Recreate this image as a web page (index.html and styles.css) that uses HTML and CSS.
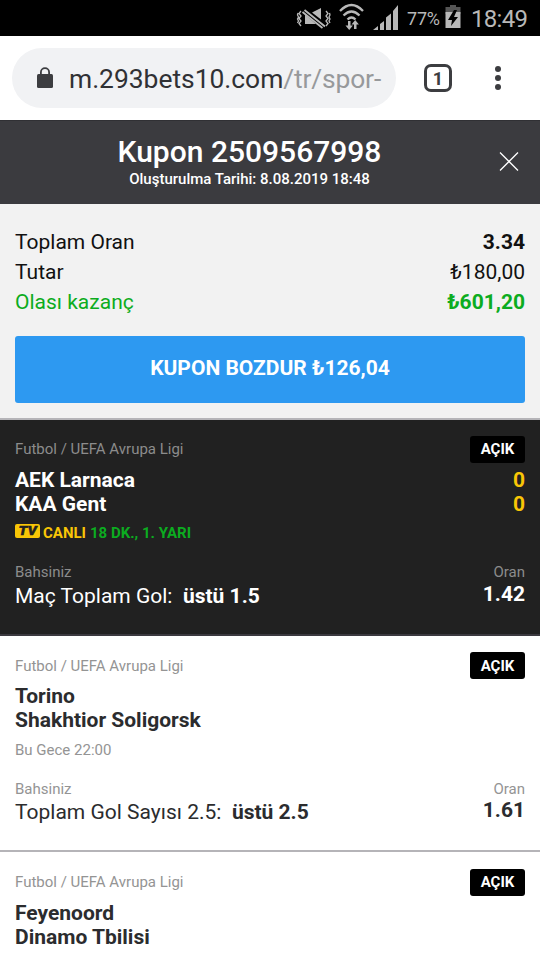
FILE: index.html
```html
<!DOCTYPE html>
<html lang="tr">
<head>
<meta charset="utf-8">
<title>Kupon 2509567998</title>
<link rel="stylesheet" href="styles.css">
</head>
<body>
<div class="status">
  <svg class="status-icons" width="104" height="36" viewBox="296 0 104 36">
    <g fill="none" stroke="#b8b8b8">
      <path stroke-width="1.300" d="M301 11l-2 2.500 2 2.500-2 2.500 2 2.500-2 2.500 2 2.500M298 13l-.5 2 1 2-1 2 1 2-1 2M326 11l2 2.500-2 2.500 2 2.500-2 2.500 2 2.500-2 2.500M329.500 13l.5 2-1 2 1 2-1 2 1 2"/>
      <path stroke-width="2.300" d="M340 11q11.500-12 23 0M343.500 15.500q8-8 16 0M347.500 19.500q4-4 8 0"/>
    </g>
    <g fill="#b8b8b8">
      <path d="M312 12.500l9-4.500v11.500zM305 14.500l11 9.500h-11z"/>
      <path d="M348 21v4.500h-2.500l3.700 4.500 3.700-4.500h-2.400V21zM354 29v-4.500h-2.500l3.700-4.500 3.700 4.500h-2.400V29z"/>
      <path d="M373 30l5-4v4zM380 24l4-3v9h-4zM386 17.500l5-4V30h-5zM393 11l5-6v25h-5z"/>
    </g>
    <path d="M304.500 10L325 26.500M302.500 12L322.500 28" stroke="#b8b8b8" stroke-width="1.800"/>
  </svg>
  <span class="percent">77%</span>
  <svg class="battery" width="16" height="36" viewBox="0 0 16 36">
    <path d="M5 5h6v2h4.500v7H.5V7H5z" fill="#555"/>
    <path d="M.5 12h15v16H.5z" fill="#b8b8b8"/>
    <path d="M9 10L3 20h4l-1 6 7-9H9l3-7z" fill="#000"/>
  </svg>
  <span class="clock">18:49</span>
</div>
<div class="browser">
  <div class="address">
    <svg width="16" height="22" viewBox="0 0 16 22">
      <path d="M3.900 8V5.200a4.100 4.100 0 0 1 8.200 0V8" fill="none" stroke="#3c3d40" stroke-width="1.800"/>
      <rect y="7" width="16" height="14" rx="1.500" fill="#3c3d40"/>
    </svg>
    <span class="url">m.293bets10.com<span class="path">/tr/spor-</span></span>
  </div>
  <div class="tabs">1</div>
  <div class="more"><i></i><i></i><i></i></div>
</div>
<header class="header">
  <div class="heading">
    <h1>Kupon 2509567998</h1>
    <p>Oluşturulma Tarihi: 8.08.2019 18:48</p>
  </div>
  <svg class="close" width="20" height="20" viewBox="0 0 20 20"><path d="M1 .5l18 18M19 .5L1 18.500" stroke="#fff" stroke-width="1.300"/></svg>
</header>
<section class="summary">
  <div class="row"><span>Toplam Oran</span><b>3.34</b></div>
  <div class="row"><span>Tutar</span><span>₺180,00</span></div>
  <div class="row win"><span>Olası kazanç</span><b>₺601,20</b></div>
  <div class="cashout">KUPON BOZDUR ₺126,04</div>
</section>
<article class="bet live">
  <div class="top"><span class="league">Futbol / UEFA Avrupa Ligi</span><span class="badge">AÇIK</span></div>
  <div class="team"><span>AEK Larnaca</span><span class="score">0</span></div>
  <div class="team"><span>KAA Gent</span><span class="score">0</span></div>
  <div class="time"><span class="tv"><span>TV</span></span><span class="canli">CANLI</span><span class="minute">18 DK., 1. YARI</span></div>
  <div class="labels"><span>Bahsiniz</span><span>Oran</span></div>
  <div class="pick"><span>Maç Toplam Gol:<b>üstü 1.5</b></span><b class="odds">1.42</b></div>
</article>
<article class="bet upcoming">
  <div class="top"><span class="league">Futbol / UEFA Avrupa Ligi</span><span class="badge">AÇIK</span></div>
  <div class="team">Torino</div>
  <div class="team">Shakhtior Soligorsk</div>
  <div class="time">Bu Gece 22:00</div>
  <div class="labels"><span>Bahsiniz</span><span>Oran</span></div>
  <div class="pick"><span>Toplam Gol Sayısı 2.5:<b>üstü 2.5</b></span><b class="odds">1.61</b></div>
</article>
<article class="bet last">
  <div class="top"><span class="league">Futbol / UEFA Avrupa Ligi</span><span class="badge">AÇIK</span></div>
  <div class="team">Feyenoord</div>
  <div class="team">Dinamo Tbilisi</div>
</article>
</body>
</html>
```

FILE: styles.css
```css
* { box-sizing: border-box; }
body { margin: 0; height: 960px; overflow: hidden; background: #fff; color: #2b2c2e; font-family: Roboto, "Noto Sans", sans-serif; font-size: 21px; }
h1, p { margin: 0; }
b { font-weight: 700; }

.status { height: 36px; background: #000; color: #b8b8b8; display: flex; align-items: center; padding-left: 296px; }
.percent { font-size: 18px; width: 37px; margin-left: 7px; letter-spacing: -.2px; margin-top: 1px; }
.battery { margin-left: 1px; }
.clock { font-size: 24px; margin-left: 10px; margin-top: 2px; letter-spacing: -.7px; }

.browser { height: 84px; display: flex; align-items: center; padding-left: 12px; }
.address { width: 384px; height: 60px; border-radius: 30px; background: #f1f2f4; display: flex; align-items: center; padding-left: 25px; }
.address svg { flex: none; margin-top: -1px; }
.url { font-size: 26.4px; margin-left: 16px; margin-top: 2px; white-space: nowrap; color: #303134; }
.path { color: #97999b; letter-spacing: -.15px; }
.tabs { width: 28px; height: 28px; margin-left: 28px; border: 3px solid #3c3d40; border-radius: 7px; display: flex; align-items: center; justify-content: center; font-size: 18px; font-weight: 700; color: #3c3d40; }
.more { margin-left: 43px; display: flex; flex-direction: column; gap: 3px; }
.more i { width: 6px; height: 6px; border-radius: 50%; background: #3c3d40; }

.header { height: 84px; background: #3b3b3f; color: #fff; display: flex; justify-content: space-between; padding-right: 21px; border-top: 1px solid #303034; }
.heading { width: 499px; padding-top: 13px; text-align: center; }
.heading h1 { font-size: 30px; line-height: 35px; font-weight: 500; }
.heading p { margin-top: 1px; font-size: 15px; line-height: 18px; font-weight: 500; }
.close { margin-top: 31px; flex: none; }

.summary { height: 216px; background: #f2f2f2; color: #111; padding: 23px 15px 0; border-bottom: 2px solid #b5b4b8; }
.row { height: 30px; line-height: 30px; display: flex; justify-content: space-between; }
.win { color: #0cac20; }
.cashout { height: 67px; margin-top: 19px; padding-bottom: 3px; border-radius: 3px; background: #2d99f1; color: #fff; font-weight: 700; display: flex; align-items: center; justify-content: center; }

.bet { height: 216px; padding: 16px 15px 0; border-bottom: 2px solid #b5b4b8; }
.top { height: 32px; display: flex; justify-content: space-between; }
.league { font-size: 15px; line-height: 18px; margin-top: 5px; color: #949494; }
.badge { width: 55px; height: 27px; border-radius: 3px; background: #000; color: #fff; font-size: 15px; line-height: 26px; font-weight: 700; text-align: center; }
.team { height: 24px; line-height: 24px; font-weight: 700; display: flex; justify-content: space-between; }
.time { font-size: 15px; height: 18px; line-height: 18px; margin-top: 9px; color: #949494; display: flex; }
.labels { font-size: 15px; height: 18px; line-height: 18px; margin-top: 21px; color: #949494; display: flex; justify-content: space-between; }
.pick { height: 30px; line-height: 30px; display: flex; justify-content: space-between; }
.pick span b { margin-left: 10.5px; }
.odds { line-height: 26px; }

.live { background: #212121; color: #fff; border-bottom-color: #3b393f; }
.live .league, .live .labels { color: #8c8c8c; }
.live .league { margin-top: 4px; }
.live .time { margin-top: 8px; font-weight: 700; }
.score, .canli { color: #f9c606; }
.tv { width: 25px; height: 14px; border-radius: 2px; background: #f9c606; color: #212121; font: italic 900 12px/14px Roboto, sans-serif; text-align: center; }
.tv span { display: inline-block; transform: scaleX(1.2); -webkit-text-stroke: .4px #212121; }
.canli { margin-left: 3px; }
.minute { margin-left: 4px; color: #0cac20; }

.upcoming .badge { line-height: 28px; }
.upcoming .pick { line-height: 28px; }
.upcoming .odds { line-height: 24px; }
.last { height: 108px; padding-top: 17px; border-bottom: 0; }
.last .league { margin-top: 4px; }
```
